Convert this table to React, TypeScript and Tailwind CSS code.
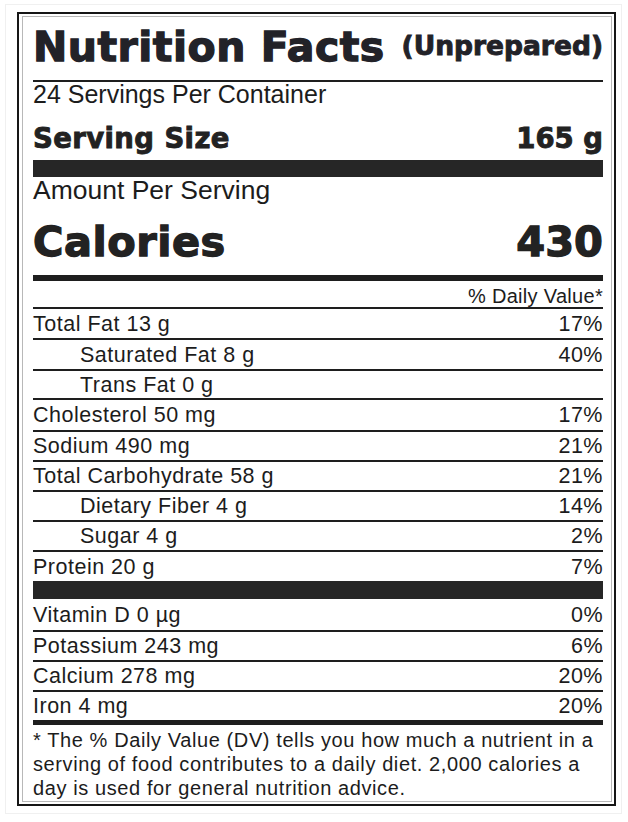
import React from "react";

const reg = "font-['Liberation_Sans',Arial,sans-serif]";
const head = "font-['DejaVu_Sans',sans-serif] font-bold";

type Row = { label: string; pct?: string; indent?: boolean; h: string };

const rows: Row[] = [
  { label: "Total Fat 13 g", pct: "17%", h: "h-[29px]" },
  { label: "Saturated Fat 8 g", pct: "40%", indent: true, h: "h-[29px]" },
  { label: "Trans Fat 0 g", indent: true, h: "h-[27px]" },
  { label: "Cholesterol 50 mg", pct: "17%", h: "h-[30px]" },
  { label: "Sodium 490 mg", pct: "21%", h: "h-[28px]" },
  { label: "Total Carbohydrate 58 g", pct: "21%", h: "h-[28px]" },
  { label: "Dietary Fiber 4 g", pct: "14%", indent: true, h: "h-[28px]" },
  { label: "Sugar 4 g", pct: "2%", indent: true, h: "h-[28px]" },
  { label: "Protein 20 g", pct: "7%", h: "h-[29px]" },
];

const minerals: Row[] = [
  { label: "Vitamin D 0 µg", pct: "0%", h: "h-[31px]" },
  { label: "Potassium 243 mg", pct: "6%", h: "h-[28px]" },
  { label: "Calcium 278 mg", pct: "20%", h: "h-[28px]" },
  { label: "Iron 4 mg", pct: "20%", h: "h-[28px]" },
];

function NRow({ r }: { r: Row }) {
  return (
    <div
      className={`${r.h} flex items-center justify-between ${reg} text-[21.5px] leading-[24px] tracking-[0.5px] text-[#1c1c1c]`}
    >
      <span className={r.indent ? "pl-[47px]" : ""}>{r.label}</span>
      <span>{r.pct ?? ""}</span>
    </div>
  );
}

function Line() {
  return <div className="h-[2px] bg-[#1e1e1e]" />;
}

export default function App() {
  return (
    <div className="w-[628px] h-[822px] bg-white pt-[4px] pl-[5px]">
      <div className="w-[617px] h-[810px] border border-[#f0f0f0] pt-[7px] pl-[11px]">
        <div className="w-[599px] h-[794px] border-2 border-[#161616] pt-[2px] pb-[2px] pl-[3px] pr-[2px]">
          <div className="h-full border border-[#b8b8b8] pl-[10px] pr-[8px] pt-[10px] text-[#1c1c1c]">
            {/* Title */}
            <div className="h-[53px] flex items-start justify-between">
              <span
                className={`${head} text-[41px] leading-[41.5px] tracking-[0.5px] text-[#222228] [-webkit-text-stroke:1.3px_#222228]`}
              >
                Nutrition Facts
              </span>
              <span
                className={`${head} text-[26.5px] leading-[27px] mt-[5px] text-[#222228] [-webkit-text-stroke:0.9px_#222228]`}
              >
                (Unprepared)
              </span>
            </div>
            <Line />
            <div className={`h-[25px] ${reg} text-[25px] leading-[25px]`}>
              24 Servings Per Container
            </div>
            <div
              className={`mt-[17px] h-[28px] flex justify-between ${head} text-[27.5px] leading-[28px] text-[#222] [-webkit-text-stroke:0.9px_#222]`}
            >
              <span className="tracking-[0.4px]">Serving Size</span>
              <span>165 g</span>
            </div>
            <div className="mt-[8px] h-[17px] bg-[#262626]" />
            <div className={`h-[26px] ${reg} text-[26.5px] leading-[26px]`}>
              Amount Per Serving
            </div>
            <div
              className={`mt-[18px] h-[42px] flex justify-between ${head} text-[41.5px] leading-[42px] text-[#222] [-webkit-text-stroke:1.3px_#222]`}
            >
              <span className="tracking-[0.5px]">Calories</span>
              <span>430</span>
            </div>
            <div className="mt-[12px] h-[6px] bg-[#1e1e1e]" />
            <div
              className={`h-[26px] pt-[5px] text-right ${reg} text-[20px] leading-[20px] tracking-[0.3px]`}
            >
              % Daily Value*
            </div>
            {rows.map((r) => (
              <React.Fragment key={r.label}>
                <Line />
                <NRow r={r} />
              </React.Fragment>
            ))}
            <div className="h-[18px] bg-[#262626]" />
            {minerals.map((r, i) => (
              <React.Fragment key={r.label}>
                {i > 0 && <Line />}
                <NRow r={r} />
              </React.Fragment>
            ))}
            <div className="h-[5px] bg-[#1e1e1e]" />
            <p
              className={`pt-[3px] ${reg} text-[20px] leading-[24px] tracking-[0.6px] whitespace-nowrap`}
            >
              * The % Daily Value (DV) tells you how much a nutrient in a
              <br />
              serving of food contributes to a daily diet. 2,000 calories a
              <br />
              day is used for general nutrition advice.
            </p>
          </div>
        </div>
      </div>
    </div>
  );
}
